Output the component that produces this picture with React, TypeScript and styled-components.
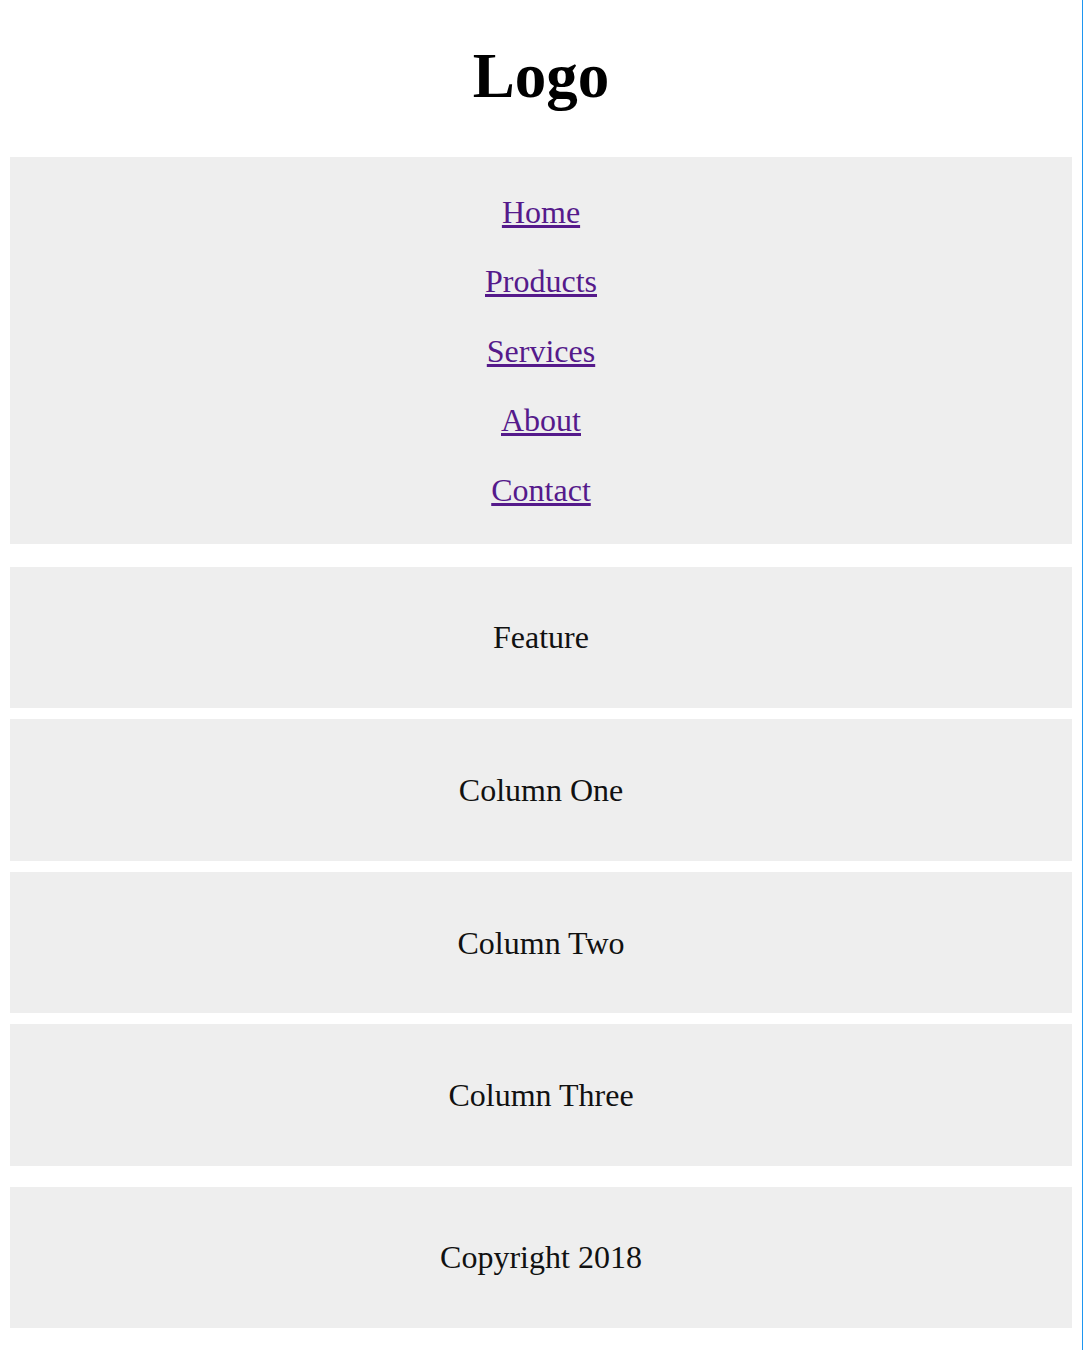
import styled, { createGlobalStyle } from "styled-components";

const GlobalStyle = createGlobalStyle`
  html, body {
    margin: 0;
    padding: 0;
    background: #fff;
  }
  body {
    font-family: "Liberation Serif", "Times New Roman", serif;
    color: #111;
  }
`;

const Page = styled.div`
  box-sizing: border-box;
  width: 1083px;
  min-height: 1350px;
  padding: 0 10px;
  border-right: 1px solid #1e96f0;
`;

const Header = styled.header`
  padding: 41.7px 0 46px;
  text-align: center;
`;

const Logo = styled.h1`
  margin: 0;
  font-size: 63px;
  line-height: 69px;
  font-weight: 700;
  color: #000;
`;

const Panel = styled.div`
  background: #eeeeee;
  display: flex;
  align-items: center;
  justify-content: center;
  font-size: 32px;
  line-height: 35px;
  padding-top: 1px;
  box-sizing: border-box;
`;

const Nav = styled.nav`
  background: #eeeeee;
  padding: 38.3px 0 36.3px;
`;

const NavList = styled.ul`
  list-style: none;
  margin: 0;
  padding: 0;
  display: flex;
  flex-direction: column;
  align-items: center;
  gap: 34.5px;
`;

const NavLink = styled.a`
  font-size: 32px;
  line-height: 35px;
  color: #551a8b;
  text-decoration: underline;
  display: block;
`;

const Main = styled.main`
  margin-top: 22.4px;
  display: flex;
  flex-direction: column;
  gap: 11.3px;
`;

const Card = styled(Panel)`
  height: 141.3px;
`;

const Footer = styled(Panel).attrs({ as: "footer" })`
  height: 141.3px;
  margin-top: 20.9px;
`;

const links = ["Home", "Products", "Services", "About", "Contact"];
const columns = ["Column One", "Column Two", "Column Three"];

export default function App() {
  return (
    <>
      <GlobalStyle />
      <Page>
        <Header>
          <Logo>Logo</Logo>
        </Header>
        <Nav>
          <NavList>
            {links.map((label) => (
              <li key={label}>
                <NavLink href="#">{label}</NavLink>
              </li>
            ))}
          </NavList>
        </Nav>
        <Main>
          <Card>Feature</Card>
          {columns.map((c) => (
            <Card key={c}>{c}</Card>
          ))}
        </Main>
        <Footer>Copyright 2018</Footer>
      </Page>
    </>
  );
}
